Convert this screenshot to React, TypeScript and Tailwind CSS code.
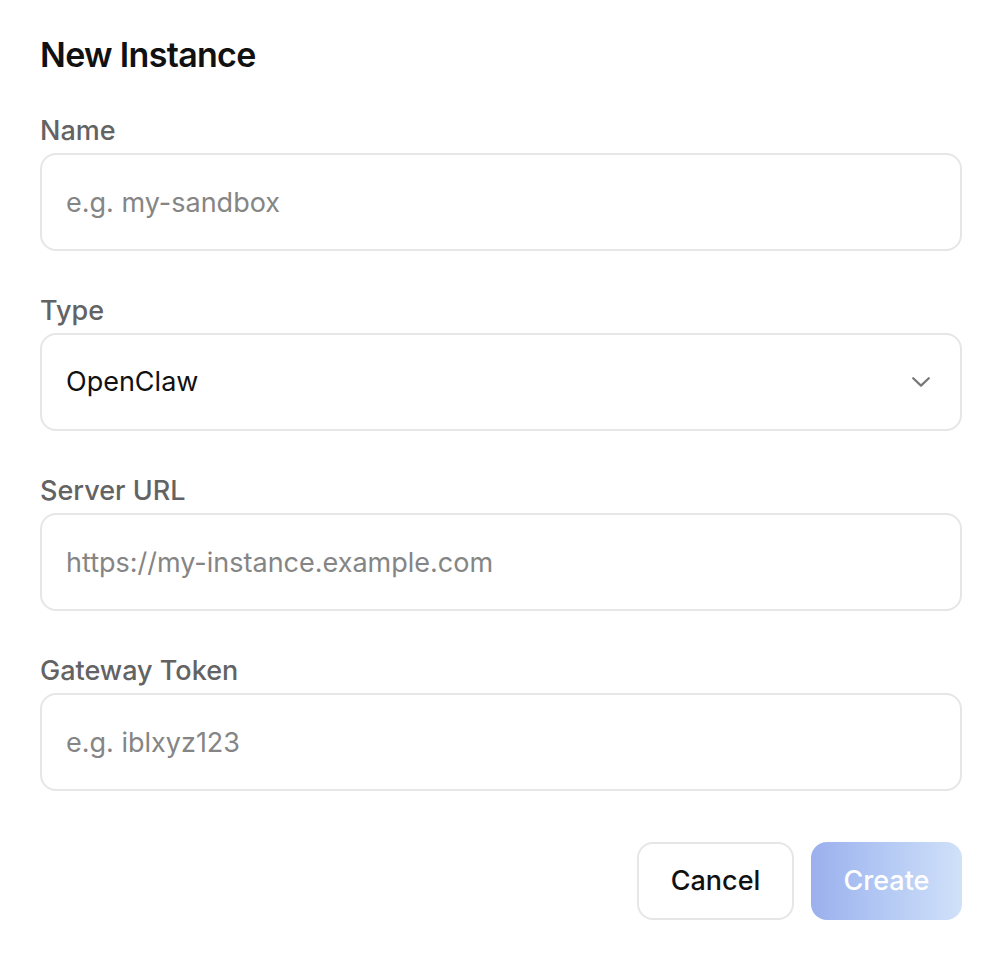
const fields = [
    { label: "Name", placeholder: "e.g. my-sandbox" },
    { label: "Type", select: "OpenClaw" },
    { label: "Server URL", placeholder: "https://my-instance.example.com" },
    { label: "Gateway Token", placeholder: "e.g. iblxyz123" },
];

export default function App() {
    return (
        <div className="min-h-screen bg-white px-[40px] pt-[35px] font-['Inter',sans-serif] text-[#111]">
            <h2 className="text-[34px] leading-[40px] font-semibold tracking-[-0.02em] text-[#111]">New Instance</h2>

            <div className="mt-[40px] flex flex-col gap-[44px]">
                {fields.map((f) => (
                    <div key={f.label} className="flex flex-col gap-[6px]">
                        <label className="text-[27px] leading-[32px] font-medium text-[#636363]">{f.label}</label>
                        {f.select ? (
                            <div className="flex h-[98px] w-[922px] items-center justify-between rounded-[16px] border-2 border-[#e6e6e6] pl-[24px] pr-[30px]">
                                <span className="text-[27px] text-[#111]">{f.select}</span>
                                <svg width="18" height="10" viewBox="0 0 18 10" fill="none" className="text-[#777]">
                                    <path d="M1.2 1.2 L9 8.6 L16.8 1.2" stroke="currentColor" strokeWidth="2.2" strokeLinecap="round" strokeLinejoin="round" />
                                </svg>
                            </div>
                        ) : (
                            <input
                                placeholder={f.placeholder}
                                className="h-[98px] w-[922px] rounded-[16px] border-2 border-[#e6e6e6] px-[24px] text-[27px] text-[#111] outline-none placeholder:text-[#858585]"
                            />
                        )}
                    </div>
                ))}
            </div>

            <div className="mt-[51px] flex w-[922px] justify-end gap-[17px]">
                <button className="h-[78px] w-[157px] rounded-[16px] border-2 border-[#e6e6e6] bg-white text-[27px] font-medium text-[#111]">
                    Cancel
                </button>
                <button
                    disabled
                    className="h-[78px] w-[151px] rounded-[16px] bg-gradient-to-r from-[#3a63dc] to-[#a3c4f5] text-[27px] font-medium text-white opacity-50"
                >
                    Create
                </button>
            </div>
        </div>
    );
}
